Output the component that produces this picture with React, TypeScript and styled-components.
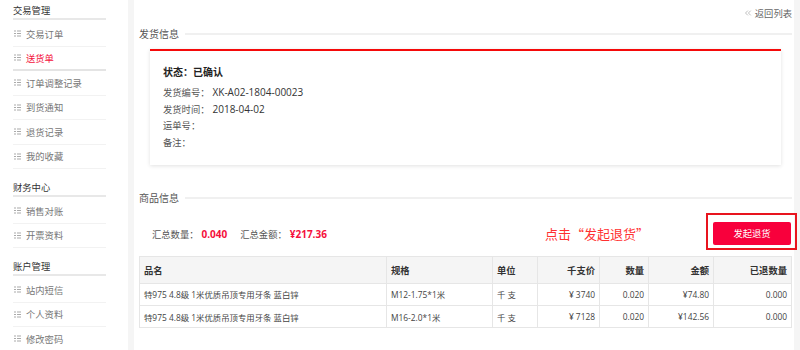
import styled, { createGlobalStyle } from 'styled-components';
import { ChevronsLeft } from 'lucide-react';

const GlobalStyle = createGlobalStyle`
  * { box-sizing: border-box; }
  html, body { margin: 0; padding: 0; }
  body {
    font-family: 'Open Sans', 'Noto Sans CJK SC', sans-serif;
    background-color: #f5f5f5;
    color: #333;
  }
`;

type NavItemType = { label: string; active?: boolean };
type NavGroupType = { title: string; items: NavItemType[] };

const navGroups: NavGroupType[] = [
  {
    title: '交易管理',
    items: [
      { label: '交易订单' },
      { label: '送货单', active: true },
      { label: '订单调整记录' },
      { label: '到货通知' },
      { label: '退货记录' },
      { label: '我的收藏' },
    ],
  },
  { title: '财务中心', items: [{ label: '销售对账' }, { label: '开票资料' }] },
  { title: '账户管理', items: [{ label: '站内短信' }, { label: '个人资料' }, { label: '修改密码' }] },
];

const details = [
  { label: '发货编号：', value: 'XK-A02-1804-00023' },
  { label: '发货时间：', value: '2018-04-02' },
  { label: '运单号：', value: '' },
  { label: '备注：', value: '' },
];

const rows = [
  { name: '特975 4.8级 1米优质吊顶专用牙条 蓝白锌', spec: 'M12-1.75*1米', unit: '千 支', price: '¥ 3740', qty: '0.020', amount: '¥74.80', returned: '0.000' },
  { name: '特975 4.8级 1米优质吊顶专用牙条 蓝白锌', spec: 'M16-2.0*1米', unit: '千 支', price: '¥ 7128', qty: '0.020', amount: '¥142.56', returned: '0.000' },
];

const ListIcon = () => (
  <svg width="7" height="7" viewBox="0 0 7 7" fill="#aaa">
    <rect x="0" y="0.5" width="2" height="1" />
    <rect x="0" y="3" width="2" height="1" />
    <rect x="0" y="5.5" width="2" height="1" />
    <rect x="3" y="0.5" width="4" height="1" />
    <rect x="3" y="3" width="4" height="1" />
    <rect x="3" y="5.5" width="4" height="1" />
  </svg>
);

export default function App() {
  return (
    <>
      <GlobalStyle />
      <Page>
        <Sidebar>
          {navGroups.map((group) => (
            <NavGroup key={group.title}>
              <NavTitle>{group.title}</NavTitle>
              {group.items.map((item) => (
                <NavItem key={item.label} $active={item.active}>
                  <ListIcon />
                  <span>{item.label}</span>
                </NavItem>
              ))}
            </NavGroup>
          ))}
        </Sidebar>

        <Main>
          <TopBar>
            <BackLink>
              <ChevronsLeft size={10} strokeWidth={1.5} color="#999" />
              返回列表
            </BackLink>
          </TopBar>

          <SectionHead>
            <SectionTitle>发货信息</SectionTitle>
            <SectionLine />
          </SectionHead>

          <InfoCard>
            <Status>状态：已确认</Status>
            {details.map((d) => (
              <DetailLine key={d.label}>
                <DetailLabel>{d.label}</DetailLabel>
                <DetailValue>{d.value}</DetailValue>
              </DetailLine>
            ))}
          </InfoCard>

          <SectionHead $top="24px">
            <SectionTitle>商品信息</SectionTitle>
            <SectionLine />
          </SectionHead>

          <SummaryRow>
            <Summary>
              <SummaryLabel>汇总数量：</SummaryLabel>
              <SummaryValue>0.040</SummaryValue>
              <SummaryLabel $gap="13px">汇总金额：</SummaryLabel>
              <SummaryValue>¥217.36</SummaryValue>
            </Summary>
            <Hint>点击“发起退货”</Hint>
            <Highlight>
              <ReturnButton>发起退货</ReturnButton>
            </Highlight>
          </SummaryRow>

          <Table>
            <colgroup>
              <col style={{ width: '247px' }} />
              <col style={{ width: '106px' }} />
              <col style={{ width: '45px' }} />
              <col style={{ width: '62px' }} />
              <col style={{ width: '49px' }} />
              <col style={{ width: '65px' }} />
              <col />
            </colgroup>
            <thead>
              <tr>
                <Th>品名</Th>
                <Th>规格</Th>
                <Th>单位</Th>
                <Th $right>千支价</Th>
                <Th $right>数量</Th>
                <Th $right>金额</Th>
                <Th $right>已退数量</Th>
              </tr>
            </thead>
            <tbody>
              {rows.map((r, i) => (
                <tr key={i}>
                  <Td>{r.name}</Td>
                  <Td>{r.spec}</Td>
                  <Td>{r.unit}</Td>
                  <Td $right>{r.price}</Td>
                  <Td $right>{r.qty}</Td>
                  <Td $right>{r.amount}</Td>
                  <Td $right>{r.returned}</Td>
                </tr>
              ))}
            </tbody>
          </Table>
        </Main>
      </Page>
    </>
  );
}

const Page = styled.div`
  display: flex;
  gap: 6px;
  width: 800px;
  height: 350px;
  overflow: hidden;
  padding-right: 6px;
`;

const Sidebar = styled.aside`
  width: 128px;
  flex-shrink: 0;
  background-color: #fff;
  padding: 3px 22px 0 13px;
`;

const NavGroup = styled.div`
  & + & {
    margin-top: 11px;
  }
`;

const NavTitle = styled.div`
  font-size: 9.3px;
  line-height: 15px;
  color: #333;
  border-bottom: 2px solid #e8e8e8;
  margin-bottom: 2px;
`;

const NavItem = styled.div<{ $active?: boolean }>`
  display: flex;
  align-items: center;
  gap: 5px;
  height: 24.5px;
  padding-left: 1px;
  font-size: 9.3px;
  color: ${(p) => (p.$active ? '#f4103c' : '#777')};
  border-bottom: ${(p) => (p.$active ? '2px solid #e4e4e4' : '1px solid #f2f2f2')};
`;

const Main = styled.main`
  flex: 1;
  background-color: #fff;
  padding: 0 2px 0 5px;
`;

const TopBar = styled.div`
  height: 25px;
  display: flex;
  justify-content: flex-end;
  align-items: center;
`;

const BackLink = styled.a`
  display: flex;
  align-items: center;
  gap: 2px;
  font-size: 9.3px;
  color: #666;
`;

const SectionHead = styled.div<{ $top?: string }>`
  display: flex;
  align-items: center;
  gap: 6px;
  height: 17px;
  margin-top: ${(p) => p.$top ?? '0'};
`;

const SectionTitle = styled.span`
  font-size: 10px;
  color: #555;
`;

const SectionLine = styled.div`
  flex: 1;
  height: 2px;
  background-color: #f0f0f0;
`;

const InfoCard = styled.section`
  margin: 7px 11px 0;
  padding: 13px 13px 15px;
  border-top: 2px solid #f50a0a;
  box-shadow: 0 1px 4px rgba(0, 0, 0, 0.12);
`;

const Status = styled.div`
  font-size: 10px;
  font-weight: 700;
  line-height: 16px;
  color: #222;
  margin-bottom: 4px;
`;

const DetailLine = styled.div`
  display: flex;
  align-items: center;
  height: 16.5px;
  font-size: 9.3px;
  color: #333;
`;

const DetailLabel = styled.span`
  color: #555;
`;

const DetailValue = styled.span`
  margin-left: 3px;
  font-size: 10px;
`;

const SummaryRow = styled.div`
  display: flex;
  align-items: center;
  margin-top: 14px;
  padding: 0 1px 0 13px;
`;

const Summary = styled.div`
  flex: 1;
  display: flex;
  align-items: center;
  padding-top: 3px;
`;

const SummaryLabel = styled.span<{ $gap?: string }>`
  font-size: 9.3px;
  color: #555;
  margin-left: ${(p) => p.$gap ?? '0'};
  margin-right: 3px;
`;

const SummaryValue = styled.span`
  font-size: 10px;
  font-weight: 700;
  color: #f5103c;
`;

const Hint = styled.span`
  font-family: 'Noto Sans CJK SC', sans-serif;
  font-size: 13px;
  color: #ff3030;
  margin-right: 64px;
  padding-top: 2px;
`;

const Highlight = styled.div`
  position: relative;

  &::after {
    content: '';
    position: absolute;
    top: -7px;
    left: -7px;
    right: -6px;
    bottom: -5px;
    border: 2px solid #e8141e;
    pointer-events: none;
  }
`;

const ReturnButton = styled.button`
  width: 78px;
  height: 23px;
  border: none;
  border-radius: 2px;
  background-color: #f8003c;
  color: #fff;
  font-family: inherit;
  font-size: 9.3px;
  padding: 0;
`;

const Table = styled.table`
  width: 100%;
  margin-top: 11px;
  border-collapse: collapse;
  table-layout: fixed;
`;

const Th = styled.th<{ $right?: boolean }>`
  height: 27px;
  padding: 0 4px;
  background-color: #f5f5f5;
  border: 1px solid #e6e6e6;
  font-size: 9.3px;
  font-weight: 700;
  color: #333;
  text-align: ${(p) => (p.$right ? 'right' : 'left')};
`;

const Td = styled.td<{ $right?: boolean }>`
  height: 22.4px;
  padding: 0 4px;
  border: 1px solid #e6e6e6;
  font-size: 8.4px;
  color: #444;
  white-space: nowrap;
  text-align: ${(p) => (p.$right ? 'right' : 'left')};
`;
